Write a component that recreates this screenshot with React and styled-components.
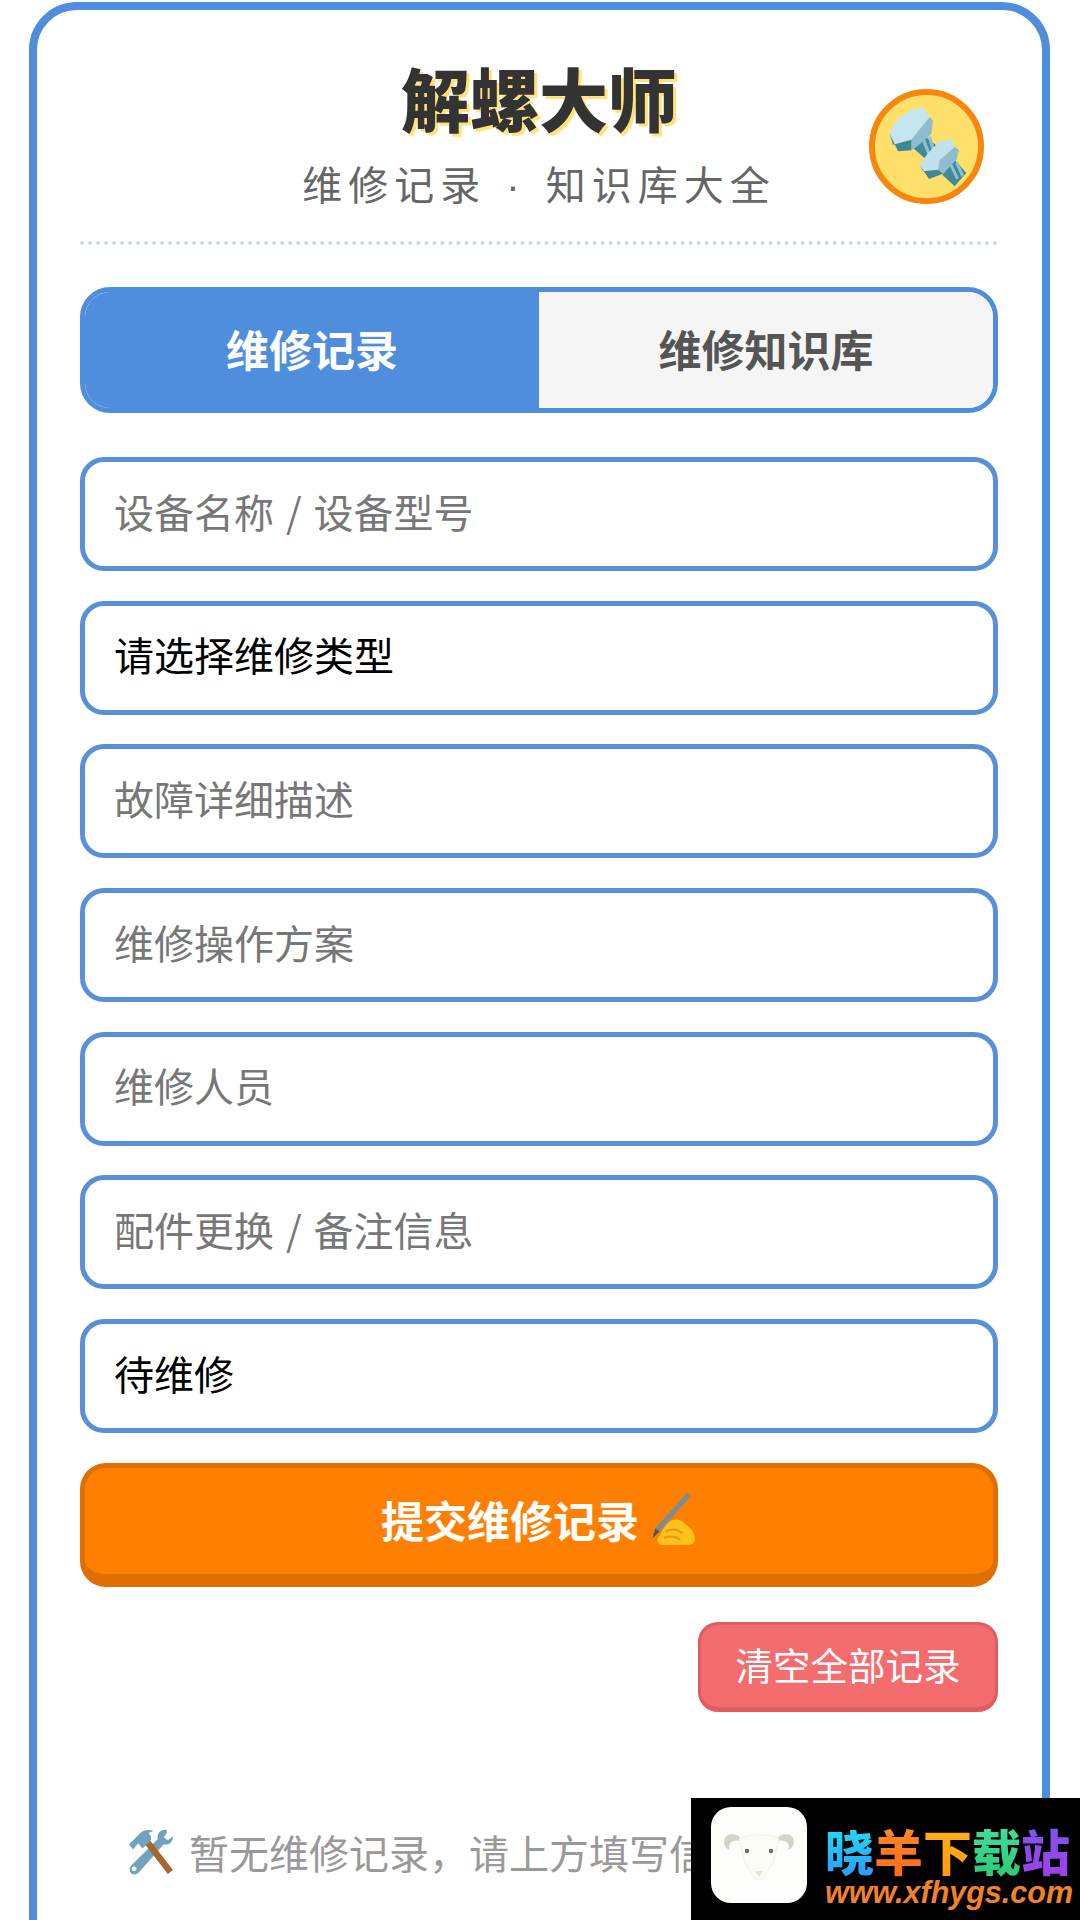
import React from 'react';
import styled, { createGlobalStyle } from 'styled-components';

const blue = '#4f8edc';
const cjk = '"Noto Sans CJK SC", "Noto Sans", sans-serif';

const GlobalStyle = createGlobalStyle`
  html, body {
    margin: 0;
    padding: 0;
    background: #fff;
  }
`;

const BoltIcon = () => (
  <svg viewBox="106 76 309 309" width="103" height="103">
    <polygon points="250,195 300,235 262,272 220,235" fill="#3f8a9b" />
    <path d="M252 212 L266 248 M270 205 L284 250" stroke="#8ac2d1" strokeWidth="10" strokeLinecap="round" fill="none" />
    <polygon points="345,270 380,310 345,350 308,315" fill="#3f8a9b" />
    <path d="M335 288 L352 324 M352 282 L368 316" stroke="#8ac2d1" strokeWidth="9" strokeLinecap="round" fill="none" />
    <polygon points="150,190 172,148 215,120 250,113 270,142 215,210 160,225" fill="#c5e5ef" />
    <polygon points="215,210 270,142 280,152 275,192 235,228 215,242" fill="#8fbccf" />
    <polygon points="150,192 160,225 215,210 215,242 175,245" fill="#3f8798" />
    <polygon points="240,285 265,250 300,215 335,208 345,232 300,272 295,300 250,305" fill="#c0e2ec" />
    <polygon points="345,232 358,240 350,270 310,312 295,300 300,272" fill="#8fbccf" />
    <polygon points="240,285 250,305 295,300 310,312 268,328" fill="#3f8798" />
  </svg>
);

const WritingHand = () => (
  <svg viewBox="0 0 48 52" width="50" height="54">
    <polygon points="38,1 42,4 12,38 8,35" fill="#7d8b93" />
    <polygon points="8,35 12,38 5,45" fill="#4c565c" />
    <path d="M20 30 C26 24 34 26 38 32 C44 36 46 40 46 46 C46 50 42 51 36 51 L16 51 C10 51 8 46 12 42 C14 38 16 34 20 30 Z" fill="#fcc21b" />
    <path d="M18 38 C24 35 30 36 34 40 M16 44 C22 42 28 43 32 46" stroke="#e39c12" strokeWidth="2" fill="none" />
  </svg>
);

const HammerWrench = () => (
  <svg viewBox="0 0 45 45" width="46" height="46">
    <path d="M38 1 C33 0 29 3 29 8 L29 10 L3 36 C0 39 2 43 4 44 C7 45 9 44 11 42 L35 15 C40 16 44 13 44 7 L39 11 L35 8 L38 4 Z" fill="#6fa3bd" />
    <circle cx="6" cy="39" r="2.4" fill="#fff" />
    <polygon points="15,13 20,9 44,40 39,44" fill="#a5652e" />
    <path d="M1 15 L10 6 C14 1 20 0 25 2 L20 4 C24 8 23 11 20 14 L14 19 L10 14 L5 20 Z" fill="#6fa3bd" />
  </svg>
);

const RamLogo = () => (
  <LogoBox viewBox="0 0 96 96" width="96" height="96">
    <rect width="96" height="96" rx="20" fill="#fdfdfa" />
    <path d="M30 34 C30 28 22 26 17 28 C11 31 12 41 19 43 C16 36 22 32 30 34 Z" fill="#d4d4c8" />
    <path d="M66 34 C66 28 74 26 79 28 C85 31 84 41 77 43 C80 36 74 32 66 34 Z" fill="#d4d4c8" />
    <path d="M28 32 C36 26 60 26 68 32 L62 56 L52 72 L44 72 L34 56 Z" fill="#fbfbf6" stroke="#f0f0e8" />
    <circle cx="36" cy="44" r="2.2" fill="#6a6a66" />
    <circle cx="60" cy="44" r="2.2" fill="#6a6a66" />
    <path d="M44 64 L52 64 L48 70 Z" fill="#e6e3d6" />
  </LogoBox>
);

export default function App() {
  const logoChars = [
    ['晓', '#20e0f0', '#2f9bff'],
    ['羊', '#ff8a28', '#ff6a1a'],
    ['下', '#ffb020', '#ff9a10'],
    ['载', '#40e0a0', '#30c878'],
    ['站', '#7a58f0', '#a040e8'],
  ];

  return (
    <Page>
      <GlobalStyle />
      <Card>
        <Header>
          <Title>解螺大师</Title>
          <Subtitle>维修记录 · 知识库大全</Subtitle>
          <Avatar><BoltIcon /></Avatar>
        </Header>

        <Tabs>
          <Tab $active>维修记录</Tab>
          <Tab>维修知识库</Tab>
        </Tabs>

        <Form>
          <Field placeholder="设备名称 / 设备型号" />
          <SelectField defaultValue="">
            <option value="">请选择维修类型</option>
            <option value="repair">故障维修</option>
            <option value="check">日常保养</option>
          </SelectField>
          <Field placeholder="故障详细描述" />
          <Field placeholder="维修操作方案" />
          <Field placeholder="维修人员" />
          <Field placeholder="配件更换 / 备注信息" />
          <SelectField defaultValue="pending">
            <option value="pending">待维修</option>
            <option value="done">已完成</option>
          </SelectField>
          <SubmitButton type="button">提交维修记录 <WritingHand /></SubmitButton>
        </Form>

        <ClearRow>
          <ClearButton type="button">清空全部记录</ClearButton>
        </ClearRow>

        <Empty>
          <HammerWrench />
          <span>暂无维修记录，请上方填写信息</span>
        </Empty>
      </Card>

      <Watermark>
        <RamLogo />
        <WatermarkText>
          <WatermarkTitle>
            {logoChars.map(([ch, from, to]) => (
              <LogoChar key={ch} $from={from} $to={to}>{ch}</LogoChar>
            ))}
          </WatermarkTitle>
          <WatermarkUrl>www.xfhygs.com</WatermarkUrl>
        </WatermarkText>
      </Watermark>
    </Page>
  );
}

const Page = styled.div`
  position: relative;
  height: 1920px;
  overflow: hidden;
  padding: 2px 30px 0 29px;
  box-sizing: border-box;
  font-family: ${cjk};
`;

const Card = styled.div`
  box-sizing: border-box;
  min-height: 2000px;
  border: 8px solid ${blue};
  border-radius: 48px;
  padding: 0 44px 0 43px;
  background: #fff;
`;

const Header = styled.div`
  position: relative;
  height: 231px;
  border-bottom: 4px dotted #c4daf0;
  display: flex;
  flex-direction: column;
  align-items: center;
`;

const Title = styled.div`
  margin-top: 42px;
  font-size: 69px;
  line-height: 90px;
  font-weight: 900;
  color: #333;
  text-shadow: 3px 3px 0 #ffe27a;
`;

const Subtitle = styled.div`
  margin-top: 19px;
  font-family: "Liberation Sans", ${cjk};
  font-size: 40px;
  line-height: 50px;
  letter-spacing: 6px;
  word-spacing: 3px;
  color: #666;
`;

const Avatar = styled.div`
  position: absolute;
  right: 14px;
  top: 79px;
  box-sizing: border-box;
  width: 115px;
  height: 115px;
  border-radius: 50%;
  border: 6px solid #f7860f;
  background: #fddf6a;
  display: flex;
  align-items: center;
  justify-content: center;
`;

const Tabs = styled.div`
  display: flex;
  box-sizing: border-box;
  height: 126px;
  margin-top: 42px;
  border: 5px solid ${blue};
  border-radius: 30px;
  overflow: hidden;
`;

const Tab = styled.div`
  flex: 1;
  display: flex;
  align-items: center;
  justify-content: center;
  padding-bottom: 4px;
  font-size: 43px;
  font-weight: 700;
  color: ${p => (p.$active ? '#fff' : '#555')};
  background: ${p => (p.$active ? blue : '#f5f5f5')};
`;

const Form = styled.div`
  display: flex;
  flex-direction: column;
  gap: 29.7px;
  margin-top: 44px;
`;

const Field = styled.input`
  box-sizing: border-box;
  width: 100%;
  height: 114px;
  padding: 0 29px 7px;
  border: 5px solid #5a90d6;
  border-radius: 24px;
  background: #fff;
  font-family: ${cjk};
  font-size: 40px;
  word-spacing: 3px;
  color: #000;
  outline: none;

  &::placeholder {
    color: #777;
  }
`;

const SelectField = styled(Field).attrs({ as: 'select' })`
  appearance: none;
`;

const SubmitButton = styled.button`
  box-sizing: border-box;
  width: 100%;
  height: 124px;
  display: flex;
  align-items: center;
  justify-content: center;
  gap: 8px;
  padding-bottom: 4px;
  border: 5px solid #e06e00;
  border-bottom-width: 13px;
  border-radius: 26px;
  background: #ff7f00;
  color: #fff;
  font-family: ${cjk};
  font-size: 43px;
  font-weight: 700;
`;

const ClearRow = styled.div`
  display: flex;
  justify-content: flex-end;
  margin-top: 35px;
`;

const ClearButton = styled.button`
  box-sizing: border-box;
  width: 300px;
  height: 90px;
  padding-bottom: 6px;
  border: 3px solid #e05c60;
  border-bottom-width: 5px;
  border-radius: 20px;
  background: #f36d6f;
  color: #fff;
  font-family: ${cjk};
  font-size: 37.5px;
`;

const Empty = styled.div`
  display: flex;
  align-items: center;
  gap: 15px;
  margin-top: 112px;
  padding-left: 48px;
  font-size: 40px;
  line-height: 56px;
  color: #999;
`;

const Watermark = styled.div`
  position: absolute;
  right: 0;
  bottom: 0;
  width: 389px;
  height: 122px;
  box-sizing: border-box;
  padding: 9px 10px 0 20px;
  display: flex;
  align-items: flex-start;
  gap: 18px;
  background: #000;
`;

const LogoBox = styled.svg`
  flex-shrink: 0;
`;

const WatermarkText = styled.div`
  display: flex;
  flex-direction: column;
`;

const WatermarkTitle = styled.div`
  display: flex;
  margin-top: 16px;
  font-size: 49px;
  line-height: 54px;
  font-weight: 900;
`;

const LogoChar = styled.span`
  background: linear-gradient(to bottom, ${p => p.$from}, ${p => p.$to});
  -webkit-background-clip: text;
  background-clip: text;
  color: transparent;
`;

const WatermarkUrl = styled.div`
  font-family: "Liberation Sans", sans-serif;
  font-size: 30.5px;
  line-height: 30px;
  font-weight: 700;
  font-style: italic;
  white-space: nowrap;
  color: #f2822a;
`;
